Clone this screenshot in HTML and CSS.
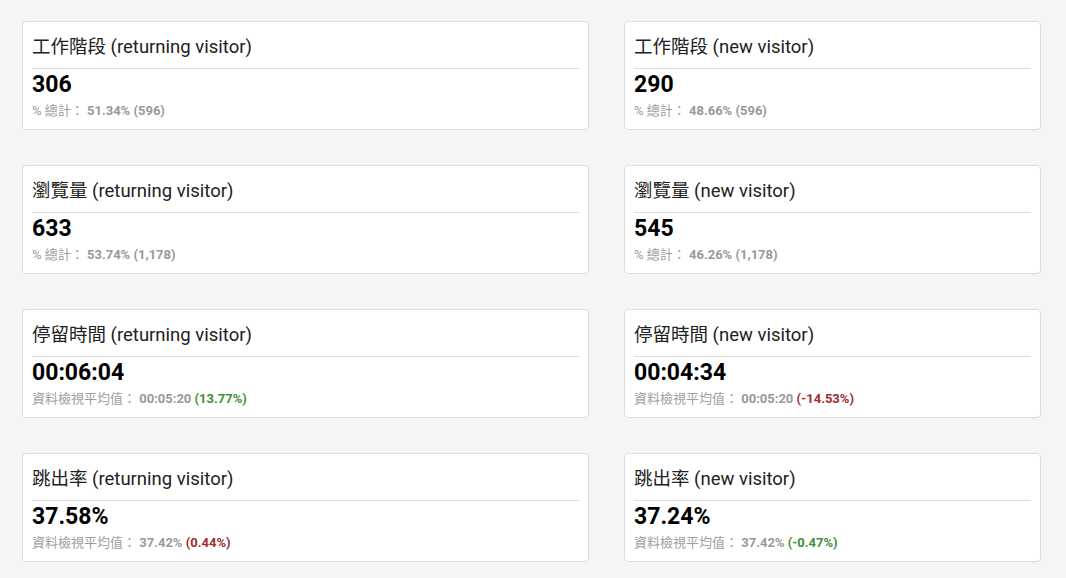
FILE: index.html
```html
<!DOCTYPE html>
<html lang="zh-Hant">

<head>
    <meta charset="UTF-8">
    <meta name="viewport" content="width=device-width, initial-scale=1.0">
    <title>訪客比較</title>
    <link rel="stylesheet" href="styles.css">
</head>

<body>
    <div class="grid">
        <div class="card">
            <div class="card-title">工作階段 (returning visitor)</div>
            <div class="card-value">306</div>
            <div class="card-sub">% 總計： <b>51.34% (596)</b></div>
        </div>
        <div class="card">
            <div class="card-title">工作階段 (new visitor)</div>
            <div class="card-value">290</div>
            <div class="card-sub">% 總計： <b>48.66% (596)</b></div>
        </div>

        <div class="card">
            <div class="card-title">瀏覽量 (returning visitor)</div>
            <div class="card-value">633</div>
            <div class="card-sub">% 總計： <b>53.74% (1,178)</b></div>
        </div>
        <div class="card">
            <div class="card-title">瀏覽量 (new visitor)</div>
            <div class="card-value">545</div>
            <div class="card-sub">% 總計： <b>46.26% (1,178)</b></div>
        </div>

        <div class="card">
            <div class="card-title">停留時間 (returning visitor)</div>
            <div class="card-value">00:06:04</div>
            <div class="card-sub">資料檢視平均值： <b>00:05:20 <span class="up">(13.77%)</span></b></div>
        </div>
        <div class="card">
            <div class="card-title">停留時間 (new visitor)</div>
            <div class="card-value">00:04:34</div>
            <div class="card-sub">資料檢視平均值： <b>00:05:20 <span class="down">(-14.53%)</span></b></div>
        </div>

        <div class="card">
            <div class="card-title">跳出率 (returning visitor)</div>
            <div class="card-value">37.58%</div>
            <div class="card-sub">資料檢視平均值： <b>37.42% <span class="down">(0.44%)</span></b></div>
        </div>
        <div class="card">
            <div class="card-title">跳出率 (new visitor)</div>
            <div class="card-value">37.24%</div>
            <div class="card-sub">資料檢視平均值： <b>37.42% <span class="up">(-0.47%)</span></b></div>
        </div>
    </div>
</body>

</html>
```

FILE: styles.css
```css
body {
    margin: 0;
    background-color: #f5f5f5;
    font-family: Roboto, "Noto Sans CJK TC", sans-serif;
    color: #212121;
}

.grid {
    display: grid;
    grid-template-columns: 567px 417px;
    column-gap: 35px;
    row-gap: 35px;
    padding: 21px 22px;
}

.card {
    background-color: #fff;
    border: 1px solid #dcdcdc;
    border-radius: 4px;
    padding: 13px 9px 10px 9px;
}

.card-title {
    font-size: 18.5px;
    line-height: 24px;
    padding-bottom: 9px;
    border-bottom: 1px solid #ddd;
}

.card-value {
    font-size: 23px;
    font-weight: bold;
    line-height: 26px;
    margin-top: 3px;
    color: #000;
}

.card-sub {
    font-size: 13px;
    line-height: 16px;
    margin-top: 5px;
    color: #9e9e9e;
}

.card-sub b {
    color: #999;
}

.up {
    color: #3f8f3a;
}

.down {
    color: #a12c2c;
}
```
